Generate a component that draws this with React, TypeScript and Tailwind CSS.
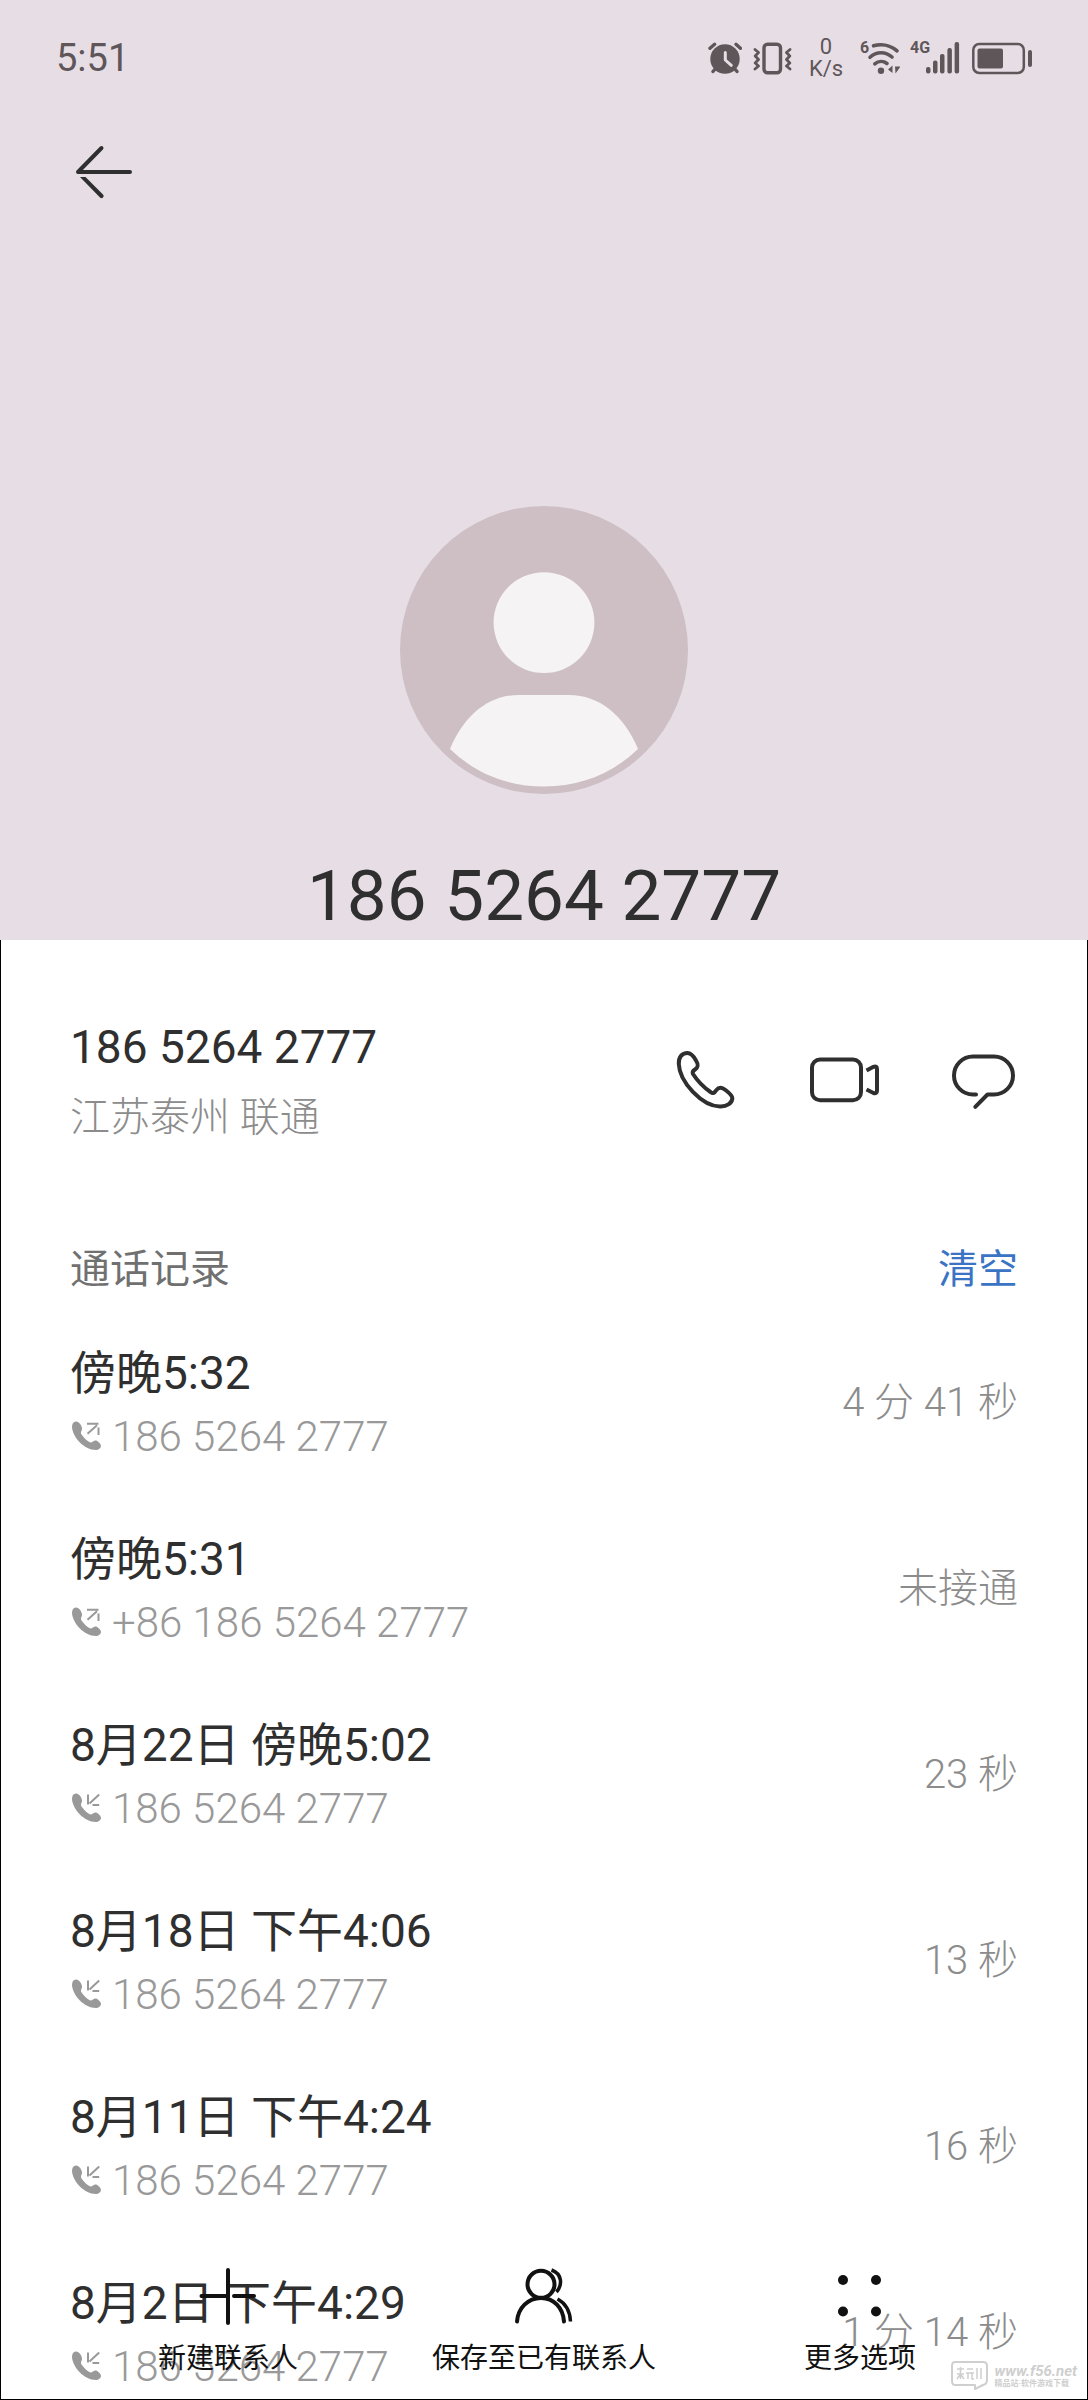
import React from 'react';

type CallType = 'out' | 'in';

interface CallRecord {
  time: string;
  number: string;
  type: CallType;
  duration: string;
}

const calls: CallRecord[] = [
  { time: '傍晚5:32', number: '186 5264 2777', type: 'out', duration: '4 分 41 秒' },
  { time: '傍晚5:31', number: '+86 186 5264 2777', type: 'out', duration: '未接通' },
  { time: '8月22日 傍晚5:02', number: '186 5264 2777', type: 'in', duration: '23 秒' },
  { time: '8月18日 下午4:06', number: '186 5264 2777', type: 'in', duration: '13 秒' },
  { time: '8月11日 下午4:24', number: '186 5264 2777', type: 'in', duration: '16 秒' },
  { time: '8月2日 下午4:29', number: '186 5264 2777', type: 'in', duration: '1 分 14 秒' },
];

const StatusBar: React.FC = () => (
  <div className="flex items-center justify-between h-[116px] px-14 text-[#5f5659]">
    <span className="text-[38px] leading-none">5:51</span>
    <div className="flex items-center gap-[10px]">
      {/* Alarm */}
      <svg width="36" height="40" viewBox="0 0 36 40" fill="none" stroke="currentColor" strokeLinecap="round">
        <circle cx="19" cy="21" r="14.7" fill="currentColor" stroke="none" />
        <path d="M4 10.3 8.6 6.3M30 6.3 34.4 10.3M7 33.5 10 30M31 33.5 28 30" strokeWidth="3.4" />
        <path d="M19.3 14.5V22l6 5.3" stroke="#e7dee5" strokeWidth="3" strokeLinejoin="round" />
      </svg>
      {/* Vibrate */}
      <svg width="40" height="40" viewBox="0 0 40 40" fill="none" stroke="currentColor" strokeLinecap="round" strokeLinejoin="round">
        <rect x="12" y="6.3" width="16.5" height="28.5" rx="3.5" strokeWidth="3.4" />
        <path d="M3 11.5 6.5 14.5 3.2 18 6.5 21.5 3.2 25 6.5 28 3 31M38 11.5 34.5 14.5 37.8 18 34.5 21.5 37.8 25 34.5 28 38 31" strokeWidth="2.8" />
      </svg>
      {/* Network speed */}
      <div className="flex flex-col items-center w-8 mx-2 text-[22px] leading-[22px]">
        <span>0</span>
        <span>K/s</span>
      </div>
      {/* Wi-Fi */}
      <div className="relative">
        <span className="absolute left-0 top-0 text-[16px] leading-5 font-bold">6</span>
        <svg width="40" height="40" viewBox="0 0 40 40" fill="none" stroke="currentColor" strokeLinecap="round">
          <path d="M13.5 7.8C22 5.6 31 7.5 37 12.8" strokeWidth="3.6" />
          <path d="M10 19.3C16.5 13.3 25.5 13.3 32 19" strokeWidth="3.6" />
          <path d="M14.8 25.8C18.5 22.8 23.5 22.8 27 25.5" strokeWidth="3.6" />
          <circle cx="21" cy="32.7" r="3.2" fill="currentColor" stroke="none" />
          <path d="M32.5 27.5V35L28 31.5ZM35 28.5H40.5L35.5 35.5Z" fill="currentColor" stroke="none" />
        </svg>
      </div>
      {/* Mobile signal */}
      <div className="relative">
        <span className="absolute left-0 top-0 text-[16px] leading-5 font-bold">4G</span>
        <svg width="52" height="40" viewBox="0 0 52 40" fill="currentColor">
          <rect x="16" y="29" width="4.5" height="6.5" rx="2" />
          <rect x="23" y="22.5" width="4.5" height="13" rx="2" />
          <rect x="30" y="16" width="4.5" height="19.5" rx="2" />
          <rect x="37.4" y="10" width="4.5" height="25.5" rx="2" />
          <rect x="44.6" y="4" width="4.5" height="31.5" rx="2" />
        </svg>
      </div>
      {/* Battery */}
      <svg width="60" height="40" viewBox="0 0 60 40" fill="none">
        <rect x="1.3" y="6" width="50.5" height="29" rx="6" stroke="currentColor" strokeWidth="2.5" />
        <rect x="5.5" y="10.5" width="25.5" height="20" rx="2" fill="currentColor" />
        <rect x="56" y="12" width="4" height="17" rx="2" fill="currentColor" />
      </svg>
    </div>
  </div>
);

const Avatar: React.FC = () => (
  <svg width="288" height="288" viewBox="0 0 288 288">
    <circle cx="144" cy="144" r="144" fill="#cebfc5" />
    <circle cx="144" cy="116.6" r="50.4" fill="#f5f3f4" />
    <path
      d="M50 243C64 209 89 189 119 189H169C199 189 224 209 238 243C212 268 180 280.5 144 280.5S76 268 50 243Z"
      fill="#f5f3f4"
    />
  </svg>
);

const CallIcon: React.FC<{ type: CallType }> = ({ type }) => (
  <svg width="32" height="32" viewBox="0 0 32 32" fill="none">
    <path
      d="M6 .5C3 .8 2 3 2 6C2.5 16 14 29 26 29C29 29 31 26.5 31 25C31 23 28 20 26 19.5C24 19 22.5 21.5 20.5 21.5C18 21 12.5 15.5 11 12.5C10.5 10.5 12.5 9 12 7C11.5 4.5 9 .3 6 .5Z"
      fill="currentColor"
    />
    {type === 'out' ? (
      <path d="M17 2.7H28.5M28.5 6.5V14M17.5 12.7 27 4.3" stroke="currentColor" strokeWidth="2" />
    ) : (
      <path d="M18 1.5V11.5M29.2 1.5 19.5 10.5M22.5 12H29.2" stroke="currentColor" strokeWidth="2" />
    )}
  </svg>
);

const iconProps = {
  fill: 'none',
  stroke: 'currentColor',
  strokeWidth: 4,
  strokeLinecap: 'round' as const,
  strokeLinejoin: 'round' as const,
};

const App: React.FC = () => {
  return (
    <div className="flex flex-col min-h-screen bg-white font-['Roboto','Noto_Sans_CJK_SC',sans-serif] text-[#2f2f2f]">
      {/* Header */}
      <header className="bg-[#e7dee5]">
        <StatusBar />
        <div className="px-[72px] pt-6">
          <button type="button" aria-label="返回" className="block">
            <svg width="64" height="64" viewBox="0 0 64 64" {...iconProps}>
              <path d="M58 32H6L29.5 8" />
              <path d="M8 37H13.5L31 54.500A2 2 0 0 1 28 57.5Z" fill="currentColor" stroke="none" />
            </svg>
          </button>
        </div>
        <div className="flex flex-col items-center pt-[302px]">
          <Avatar />
          <h1 className="mt-[58px] text-[71px] leading-[88px]">186 5264 2777</h1>
        </div>
      </header>

      <main className="relative flex-1 px-[69px] pb-[7px] border-x border-b border-black">
        {/* Number and quick actions */}
        <section className="flex items-center justify-between pt-[77px] pb-[83px]">
          <div>
            <div className="text-[46px] leading-[60px]">186 5264 2777</div>
            <div className="mt-4 text-[40px] leading-[50px] font-light text-[#8c8c8c]">江苏泰州 联通</div>
          </div>
          <div className="flex gap-[67px]">
            <button type="button" aria-label="拨打电话">
              <svg width="72" height="72" viewBox="0 0 72 72" {...iconProps}>
                <path d="M19.5 9C14 9 10.5 13 10.8 20C11.5 38 34 62 52 62.5C59 62.7 64.5 59 64.3 54C64.2 51.5 62 49.5 57.5 46C53 42.5 50.5 43.5 48 46.5C46.5 49 45 50 42.5 48C36 43.5 29.5 37 25 30C24 28 25 26.8 27 25.5C30.5 23 30.5 20.5 28 16.5C25.5 12 23 9 19.5 9Z" />
              </svg>
            </button>
            <button type="button" aria-label="视频通话">
              <svg width="72" height="72" viewBox="0 0 72 72" {...iconProps}>
                <rect x="5" y="15.5" width="49" height="40.7" rx="8" />
                <path d="M59.5 26.5 66.5 22.8Q70 21.5 70 25V46.5Q70 50 66.5 49L59.5 45.5" strokeLinecap="butt" />
              </svg>
            </button>
            <button type="button" aria-label="发送信息">
              <svg width="72" height="72" viewBox="0 0 72 72" {...iconProps}>
                <path d="M30 50.5H27A19 19 0 0 1 27 12.5H48A19 19 0 0 1 48 50.5H41.5L29.3 62.8" />
              </svg>
            </button>
          </div>
        </section>

        {/* Call log */}
        <section>
          <div className="flex items-center justify-between h-[84px] pt-1 text-[40px]">
            <h2 className="text-[#707070]">通话记录</h2>
            <button type="button" className="text-[#3b74c4]">清空</button>
          </div>
          <ul className="pt-[33px] space-y-[67px]">
            {calls.map((call) => (
              <li key={call.time} className="flex items-center justify-between">
                <div>
                  <div className="text-[46px] leading-[60px]">{call.time}</div>
                  <div className="flex items-center gap-[10px] mt-[9px] text-[42px] leading-[50px] font-light text-[#999999]">
                    <CallIcon type={call.type} />
                    {call.number}
                  </div>
                </div>
                <div className="text-[40px] leading-[50px] font-light text-[#8c8c8c]">{call.duration}</div>
              </li>
            ))}
          </ul>
        </section>

        {/* Bottom toolbar floats over the list */}
        <nav className="absolute inset-x-0 bottom-0 flex px-[69px] pb-[22px] text-[28px] leading-9 text-[#111111]">
          <button type="button" className="flex flex-col flex-1 items-center gap-[13px] whitespace-nowrap">
            <svg width="64" height="64" viewBox="0 0 64 64" {...iconProps}>
              <path d="M32 6V59M5.5 32H30M38 32H58" />
            </svg>
            新建联系人
          </button>
          <button type="button" className="flex flex-col flex-1 items-center gap-[13px] whitespace-nowrap">
            <svg width="64" height="64" viewBox="0 0 64 64" {...iconProps}>
              <circle cx="29" cy="20.3" r="13.5" />
              <path d="M5 57.5C6 44 16 34 29 34S51 44 52 57.5" />
              <path d="M39.5 6C50.5 10 50.5 21 44.5 28M45.5 35C53 39 58 47 58.5 57.5" strokeWidth="3.5" strokeLinecap="butt" />
            </svg>
            保存至已有联系人
          </button>
          <button type="button" className="flex flex-col flex-1 items-center gap-[13px] whitespace-nowrap">
            <svg width="64" height="64" viewBox="0 0 64 64" fill="currentColor">
              <circle cx="15" cy="16" r="5" />
              <circle cx="48" cy="16" r="5" />
              <circle cx="15" cy="47.5" r="5" />
              <circle cx="48" cy="47.5" r="5" />
            </svg>
            更多选项
          </button>
        </nav>

        {/* Site mark */}
        <div className="absolute right-[10px] bottom-2 flex items-center gap-1.5 text-[#cfcfcf]">
          <svg width="39" height="31" viewBox="0 0 39 31" fill="none" stroke="currentColor" strokeWidth="2" strokeLinejoin="round">
            <path d="M5 2H33Q37 2 37 6V20Q37 24 33 25L25 29V25H5Q2 25 2 21V6Q2 2 5 2Z" />
            <path d="M7 9H14M10.5 7V19M7 14H14M7 19 10.5 14 14 19M17 9H23M16 13H24M18 13V19M22 13V19H24M27 8V19M31 8V19" strokeWidth="1.5" />
          </svg>
          <div className="font-bold">
            <div className="text-[15px] leading-4 italic">www.f56.net</div>
            <div className="text-[8px] leading-[10px]">精品站·软件游戏下载</div>
          </div>
        </div>
      </main>
    </div>
  );
};

export default App;
